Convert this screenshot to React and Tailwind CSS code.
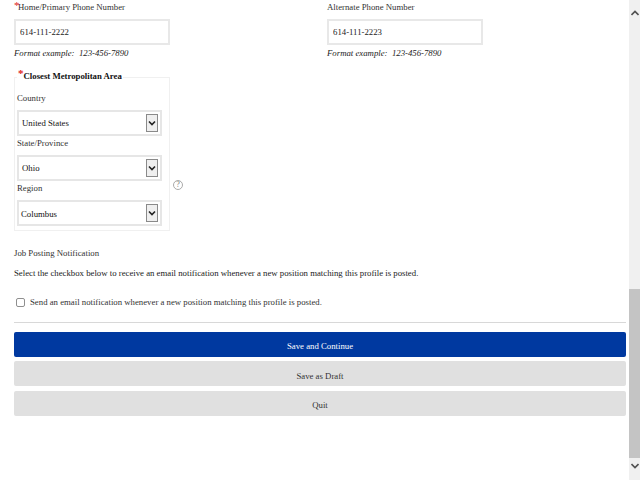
import React from 'react';

const Req = () => <span className="text-[#e02020] text-[11px] leading-[6px] align-top">*</span>;

const PhoneField = ({ label, value, required }) => (
  <div className="w-[156px]">
    <div className={`h-[19px] pt-[2px] leading-[10px] text-[#333] whitespace-nowrap ${required ? 'pl-[4px]' : ''}`}>
      {required && <span className="absolute -ml-[4px]"><Req /></span>}
      {label}
    </div>
    <input
      readOnly
      value={value}
      className="block w-[156px] h-[26px] px-[4px] bg-white border-2 border-[#e8e8e8] text-[#222] outline-none"
    />
    <div className="mt-[3px] leading-[10px] italic text-[#222] whitespace-pre">{'Format example:  123-456-7890'}</div>
  </div>
);

const SelectField = ({ label, value, labelH, pad }) => (
  <div>
    <div className={labelH}>{label}</div>
    <div className="relative w-[145px] h-[26px] bg-white border-2 border-[#e6e6e6]">
      <div className={`${pad} text-[#111]`}>{value}</div>
      <div className="absolute right-[2px] top-[2px] w-[12px] h-[18px] bg-[#efefef] border border-[#8a8a8a] flex items-center justify-center">
        <svg width="8" height="6" viewBox="0 0 8 6" fill="none">
          <path d="M1 1.5 L4 4.5 L7 1.5" stroke="#222" strokeWidth="1.6" />
        </svg>
      </div>
    </div>
  </div>
);

const App = () => {
  return (
    <div className="flex w-[640px] h-[480px] overflow-hidden bg-white font-['Liberation_Serif',serif] text-[8.75px]">
      <div className="w-[629px] pl-[14px] pr-[3px]">
        <div className="flex gap-[157px]">
          <PhoneField label="Home/Primary Phone Number" value="614-111-2222" required />
          <PhoneField label="Alternate Phone Number" value="614-111-2223" />
        </div>

        <div className="flex mt-[19px]">
          <div className="relative w-[156px] h-[154px] border border-[#f0f0f0] pl-[2px] pt-[11px]">
            <div className="absolute -top-[8px] left-[2px] bg-white px-[1px] font-bold leading-[12px] text-[#111] whitespace-nowrap">
              <Req />Closest Metropolitan Area
            </div>
            <div className="text-[#333]">
              <SelectField label="Country" value="United States" labelH="h-[21px] pt-[4px] leading-[10px]" pad="pl-[3px] leading-[22px]" />
              <SelectField label="State/Province" value="Ohio" labelH="h-[19px] leading-[10px] pt-[2px]" pad="pl-[3px] leading-[22px]" />
              <SelectField label="Region" value="Columbus" labelH="h-[19px] leading-[10px] pt-[2px]" pad="pl-[2px] leading-[24px]" />
            </div>
          </div>
          <div className="self-end mb-[41px] ml-[3px] w-[10px] h-[10px] rounded-full border border-[#aaa] text-[#777] text-[8px] leading-[8px] text-center">?</div>
        </div>

        <div className="mt-[17px] leading-[10px] text-[#333]">Job Posting Notification</div>
        <div className="mt-[10px] leading-[10px] text-[#222]">Select the checkbox below to receive an email notification whenever a new position matching this profile is posted.</div>

        <div className="flex items-center mt-[19px] pl-[2px] h-[10px]">
          <div className="w-[9px] h-[9px] bg-white border border-[#8f8f8f] rounded-[2px]"></div>
          <div className="ml-[5px] leading-[10px] text-[#333]">Send an email notification whenever a new position matching this profile is posted.</div>
        </div>

        <div className="mt-[15px] border-t border-[#d8d8d8]"></div>

        <div className="flex flex-col mt-[9px]">
          <button className="h-[25px] pt-[5px] bg-[#0039a0] rounded-[2px] text-white">Save and Continue</button>
          <button className="mt-[4px] h-[25px] pt-[7px] bg-[#e0e0e0] rounded-[2px] text-[#333]">Save as Draft</button>
          <button className="mt-[5px] h-[25px] pt-[5px] bg-[#e0e0e0] rounded-[2px] text-[#333]">Quit</button>
        </div>
      </div>

      <div className="flex flex-col w-[11px] h-[480px] bg-[#f0f0f0]">
        <div className="h-[26px] flex items-center justify-center">
          <svg width="8" height="6" viewBox="0 0 8 6" fill="none"><path d="M0.5 5 L4 1.5 L7.5 5" stroke="#505050" strokeWidth="1.6" /></svg>
        </div>
        <div className="flex-1 pt-[263px]">
          <div className="h-[169px] bg-[#c4c4c4]"></div>
        </div>
        <div className="h-[22px] pt-[5px] flex justify-center">
          <svg width="8" height="6" viewBox="0 0 8 6" fill="none"><path d="M0.5 1 L4 4.5 L7.5 1" stroke="#505050" strokeWidth="1.6" /></svg>
        </div>
      </div>
    </div>
  );
};

export default App;
